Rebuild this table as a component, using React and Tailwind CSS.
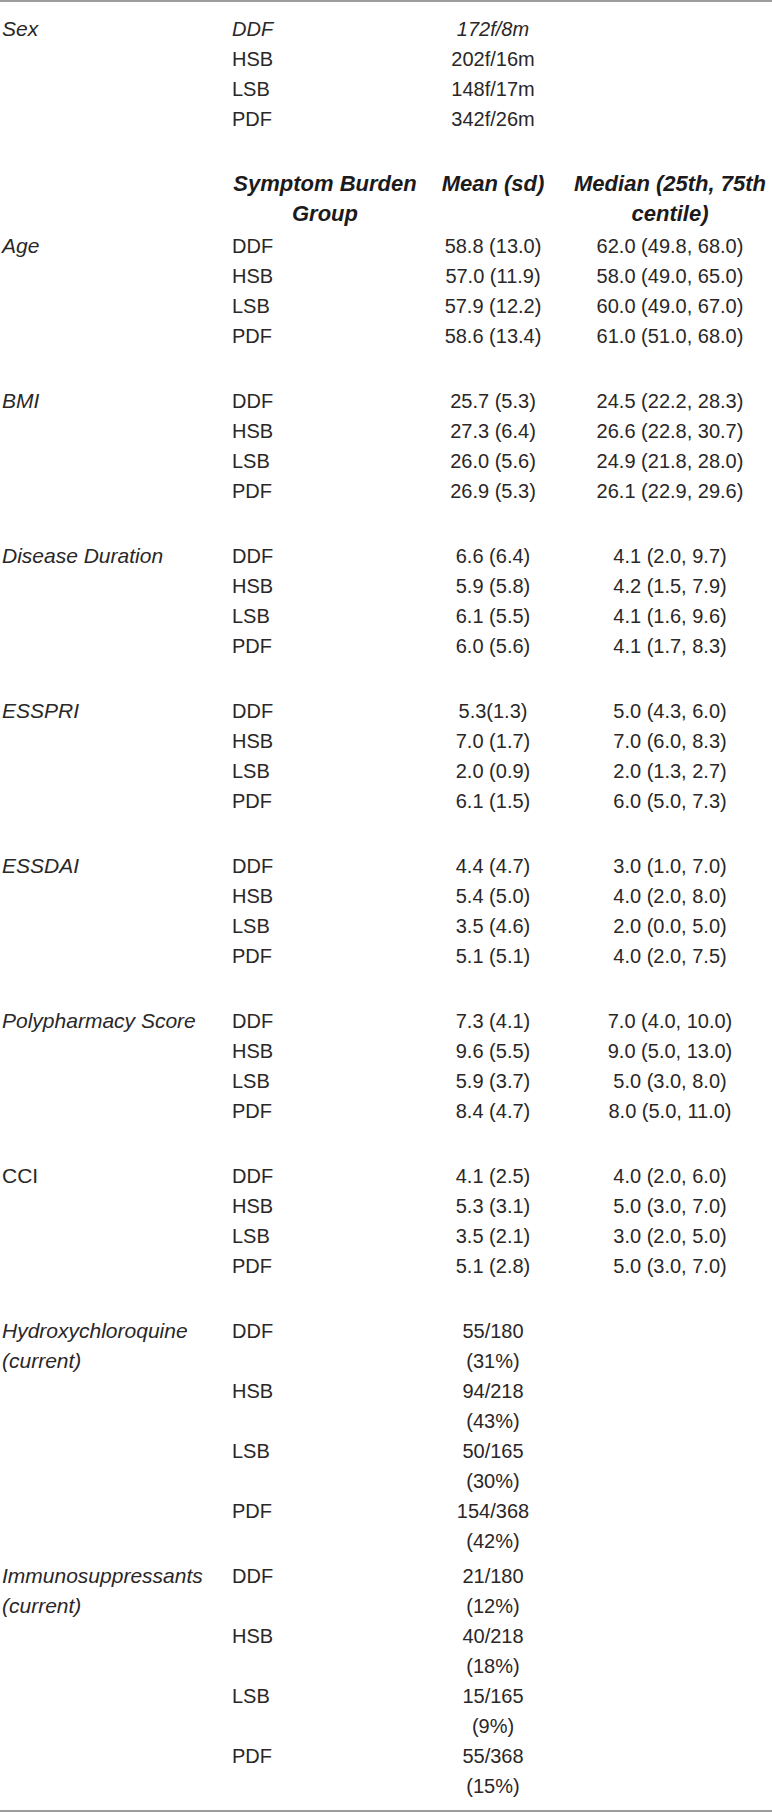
const groups = [
  {
    label: 'Age',
    rows: [
      ['DDF', '58.8 (13.0)', '62.0 (49.8, 68.0)'],
      ['HSB', '57.0 (11.9)', '58.0 (49.0, 65.0)'],
      ['LSB', '57.9 (12.2)', '60.0 (49.0, 67.0)'],
      ['PDF', '58.6 (13.4)', '61.0 (51.0, 68.0)'],
    ],
  },
  {
    label: 'BMI',
    rows: [
      ['DDF', '25.7 (5.3)', '24.5 (22.2, 28.3)'],
      ['HSB', '27.3 (6.4)', '26.6 (22.8, 30.7)'],
      ['LSB', '26.0 (5.6)', '24.9 (21.8, 28.0)'],
      ['PDF', '26.9 (5.3)', '26.1 (22.9, 29.6)'],
    ],
  },
  {
    label: 'Disease Duration',
    rows: [
      ['DDF', '6.6 (6.4)', '4.1 (2.0, 9.7)'],
      ['HSB', '5.9 (5.8)', '4.2 (1.5, 7.9)'],
      ['LSB', '6.1 (5.5)', '4.1 (1.6, 9.6)'],
      ['PDF', '6.0 (5.6)', '4.1 (1.7, 8.3)'],
    ],
  },
  {
    label: 'ESSPRI',
    rows: [
      ['DDF', '5.3(1.3)', '5.0 (4.3, 6.0)'],
      ['HSB', '7.0 (1.7)', '7.0 (6.0, 8.3)'],
      ['LSB', '2.0 (0.9)', '2.0 (1.3, 2.7)'],
      ['PDF', '6.1 (1.5)', '6.0 (5.0, 7.3)'],
    ],
  },
  {
    label: 'ESSDAI',
    rows: [
      ['DDF', '4.4 (4.7)', '3.0 (1.0, 7.0)'],
      ['HSB', '5.4 (5.0)', '4.0 (2.0, 8.0)'],
      ['LSB', '3.5 (4.6)', '2.0 (0.0, 5.0)'],
      ['PDF', '5.1 (5.1)', '4.0 (2.0, 7.5)'],
    ],
  },
  {
    label: 'Polypharmacy Score',
    rows: [
      ['DDF', '7.3 (4.1)', '7.0 (4.0, 10.0)'],
      ['HSB', '9.6 (5.5)', '9.0 (5.0, 13.0)'],
      ['LSB', '5.9 (3.7)', '5.0 (3.0, 8.0)'],
      ['PDF', '8.4 (4.7)', '8.0 (5.0, 11.0)'],
    ],
  },
  {
    label: 'CCI',
    upright: true,
    rows: [
      ['DDF', '4.1 (2.5)', '4.0 (2.0, 6.0)'],
      ['HSB', '5.3 (3.1)', '5.0 (3.0, 7.0)'],
      ['LSB', '3.5 (2.1)', '3.0 (2.0, 5.0)'],
      ['PDF', '5.1 (2.8)', '5.0 (3.0, 7.0)'],
    ],
  },
];

const drugs = [
  {
    label: 'Hydroxychloroquine (current)',
    rows: [
      ['DDF', '55/180', '(31%)'],
      ['HSB', '94/218', '(43%)'],
      ['LSB', '50/165', '(30%)'],
      ['PDF', '154/368', '(42%)'],
    ],
  },
  {
    label: 'Immunosuppressants (current)',
    rows: [
      ['DDF', '21/180', '(12%)'],
      ['HSB', '40/218', '(18%)'],
      ['LSB', '15/165', '(9%)'],
      ['PDF', '55/368', '(15%)'],
    ],
  },
];

function Label({ children, upright }) {
  return (
    <div className={`w-[232px] shrink-0 pl-[2px] pr-4 text-[21px] ${upright ? '' : 'italic'}`}>
      {children}
    </div>
  );
}

function StatGroup({ label, upright, rows, className = '' }) {
  return (
    <div className={`flex ${className}`}>
      <Label upright={upright}>{label}</Label>
      <div className="flex flex-col">
        {rows.map(([group, mean, median]) => (
          <div key={group} className="flex">
            <div className="w-[186px] shrink-0">{group}</div>
            <div className="w-[150px] shrink-0 text-center">{mean}</div>
            <div className="w-[204px] shrink-0 text-center">{median}</div>
          </div>
        ))}
      </div>
    </div>
  );
}

function CountGroup({ label, rows, className = '' }) {
  return (
    <div className={`flex ${className}`}>
      <Label>{label}</Label>
      <div className="flex flex-col">
        {rows.map(([group, count, pct]) => (
          <div key={group} className="flex">
            <div className="w-[186px] shrink-0">{group}</div>
            <div className="w-[150px] shrink-0 text-center">
              <div>{count}</div>
              <div>{pct}</div>
            </div>
          </div>
        ))}
      </div>
    </div>
  );
}

export default function App() {
  const sex = [
    ['DDF', '172f/8m', true],
    ['HSB', '202f/16m'],
    ['LSB', '148f/17m'],
    ['PDF', '342f/26m'],
  ];

  return (
    <div className="w-[772px] bg-white font-['Liberation_Sans',Arial,sans-serif] text-[20px] leading-[30px] text-[#2a2728]">
      <div className="border-t-2 border-b-2 border-[#9c9c9c] pt-[12px] pb-[9px]">
        <div className="flex">
          <Label>Sex</Label>
          <div className="flex flex-col">
            {sex.map(([group, value, italic]) => (
              <div key={group} className={`flex ${italic ? 'italic' : ''}`}>
                <div className="w-[186px] shrink-0">{group}</div>
                <div className="w-[150px] shrink-0 text-center">{value}</div>
              </div>
            ))}
          </div>
        </div>

        <div className="mt-[35px] flex text-[22px] font-bold italic text-[#1c1a1b]">
          <div className="w-[232px] shrink-0" />
          <div className="w-[186px] shrink-0 text-center">Symptom Burden Group</div>
          <div className="w-[150px] shrink-0 text-center">Mean (sd)</div>
          <div className="w-[204px] shrink-0 text-center">Median (25th, 75th centile)</div>
        </div>

        {groups.map((g, i) => (
          <StatGroup
            key={g.label}
            label={g.label}
            upright={g.upright}
            rows={g.rows}
            className={i === 0 ? 'mt-[2px]' : 'mt-[35px]'}
          />
        ))}

        <CountGroup label={drugs[0].label} rows={drugs[0].rows} className="mt-[35px]" />
        <CountGroup label={drugs[1].label} rows={drugs[1].rows} className="mt-[5px]" />
      </div>
    </div>
  );
}
